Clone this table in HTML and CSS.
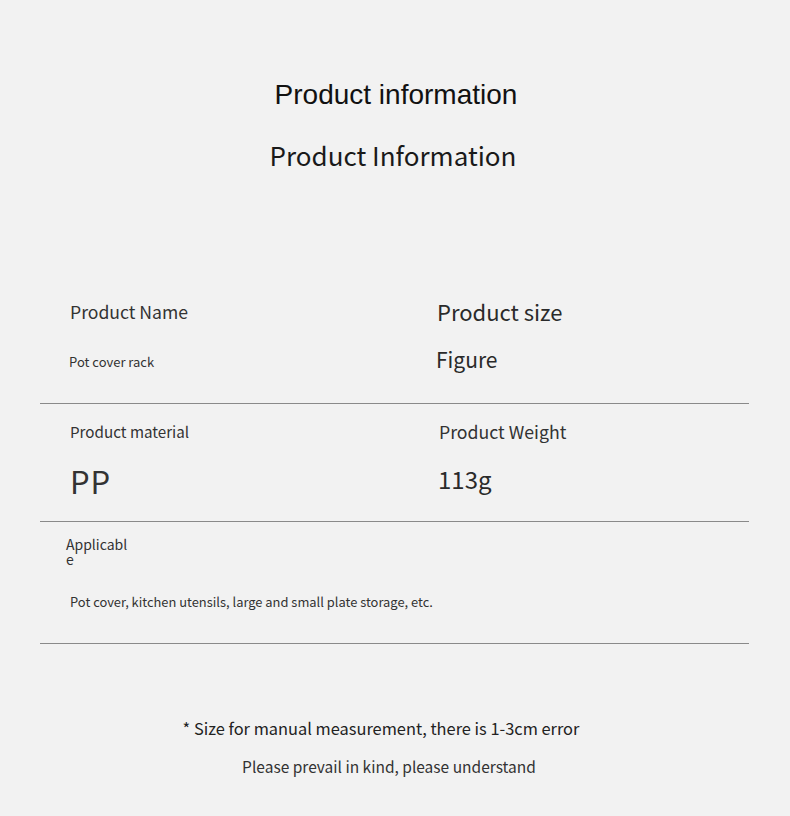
FILE: index.html
```html
<!DOCTYPE html>
<html>
<head>
<meta charset="utf-8">
<link rel="stylesheet" href="styles.css">
</head>
<body>
<div class="page">
  <h1 class="title-en">Product information</h1>
  <h2 class="title-sub">Product Information</h2>
  <div class="table">
    <div class="row row1">
      <div class="cell">
        <div class="label l-name">Product Name</div>
        <div class="value v-name">Pot cover rack</div>
      </div>
      <div class="cell right">
        <div class="label l-size">Product size</div>
        <div class="value v-size">Figure</div>
      </div>
    </div>
    <div class="row row2">
      <div class="cell">
        <div class="label l-mat">Product material</div>
        <div class="value v-mat">PP</div>
      </div>
      <div class="cell right">
        <div class="label l-weight">Product Weight</div>
        <div class="value v-weight">113g</div>
      </div>
    </div>
    <div class="row row3">
      <div class="cell full">
        <div class="label l-app">Applicable</div>
        <div class="value v-app">Pot cover, kitchen utensils, large and small plate storage, etc.</div>
      </div>
    </div>
  </div>
  <div class="notes">
    <p class="note1">* Size for manual measurement, there is 1-3cm error</p>
    <p class="note2">Please prevail in kind, please understand</p>
  </div>
</div>
</body>
</html>
```
FILE: styles.css
```css
html, body {
  margin: 0;
  padding: 0;
  background: #f2f2f2;
}
body {
  font-family: "Noto Sans CJK SC", "Noto Sans", sans-serif;
  color: #2b2b2b;
}
.page {
  width: 790px;
  height: 816px;
  box-sizing: border-box;
  padding-top: 77px;
  display: flex;
  flex-direction: column;
  align-items: center;
}
.title-en {
  margin: 0;
  font-family: "Liberation Sans", Arial, sans-serif;
  font-weight: 400;
  font-size: 28px;
  line-height: 36px;
  color: #111;
  transform: translateX(1px);
}
.title-sub {
  margin: 24px 0 0 0;
  font-weight: 400;
  font-size: 26px;
  line-height: 36px;
  color: #1a1a1a;
  transform: translateX(-2px);
}
.table {
  width: 709px;
  margin-top: 121px;
  margin-left: -1px;
}
.row {
  display: grid;
  grid-template-columns: 396px 1fr;
  border-bottom: 1px solid #8a8a8a;
}
.row1 { height: 109px; }
.row2 { height: 117px; }
.row3 { height: 121px; grid-template-columns: 1fr; }
.cell {
  display: flex;
  flex-direction: column;
  padding-left: 30px;
}
.cell.right { padding-left: 0; }
.label, .value { line-height: 1.3; white-space: nowrap; }
.l-name { font-size: 17.6px; margin-top: 7px; color: #333; }
.v-name { font-size: 13px; margin-top: 30px; margin-left: -1px; color: #333; }
.l-size { font-size: 22px; margin-top: 3px; margin-left: 1px; color: #2a2a2a; }
.v-size { font-size: 21px; margin-top: 20px; color: #2a2a2a; }
.l-mat { font-size: 15.2px; margin-top: 18px; color: #333; }
.v-mat { font-size: 31px; margin-top: 19px; letter-spacing: 1px; color: #333; }
.l-weight { font-size: 17.7px; margin-top: 16px; margin-left: 3px; color: #333; }
.v-weight { font-size: 24px; margin-top: 20px; margin-left: 2px; color: #2a2a2a; }
.l-app {
  font-size: 14px;
  line-height: 15px;
  width: 62px;
  white-space: normal;
  word-break: break-all;
  margin-top: 15px;
  margin-left: -4px;
  color: #333;
}
.v-app { font-size: 12.9px; margin-top: 27px; color: #333; }
.notes {
  margin-top: 72px;
  display: flex;
  flex-direction: column;
  align-items: center;
}
.notes p { margin: 0; }
.note1 {
  font-size: 16.4px;
  line-height: 24px;
  color: #222;
  transform: translateX(-14px);
}
.note2 {
  font-size: 15.5px;
  line-height: 22px;
  margin-top: 15px !important;
  color: #333;
  transform: translateX(-6px);
}
```
